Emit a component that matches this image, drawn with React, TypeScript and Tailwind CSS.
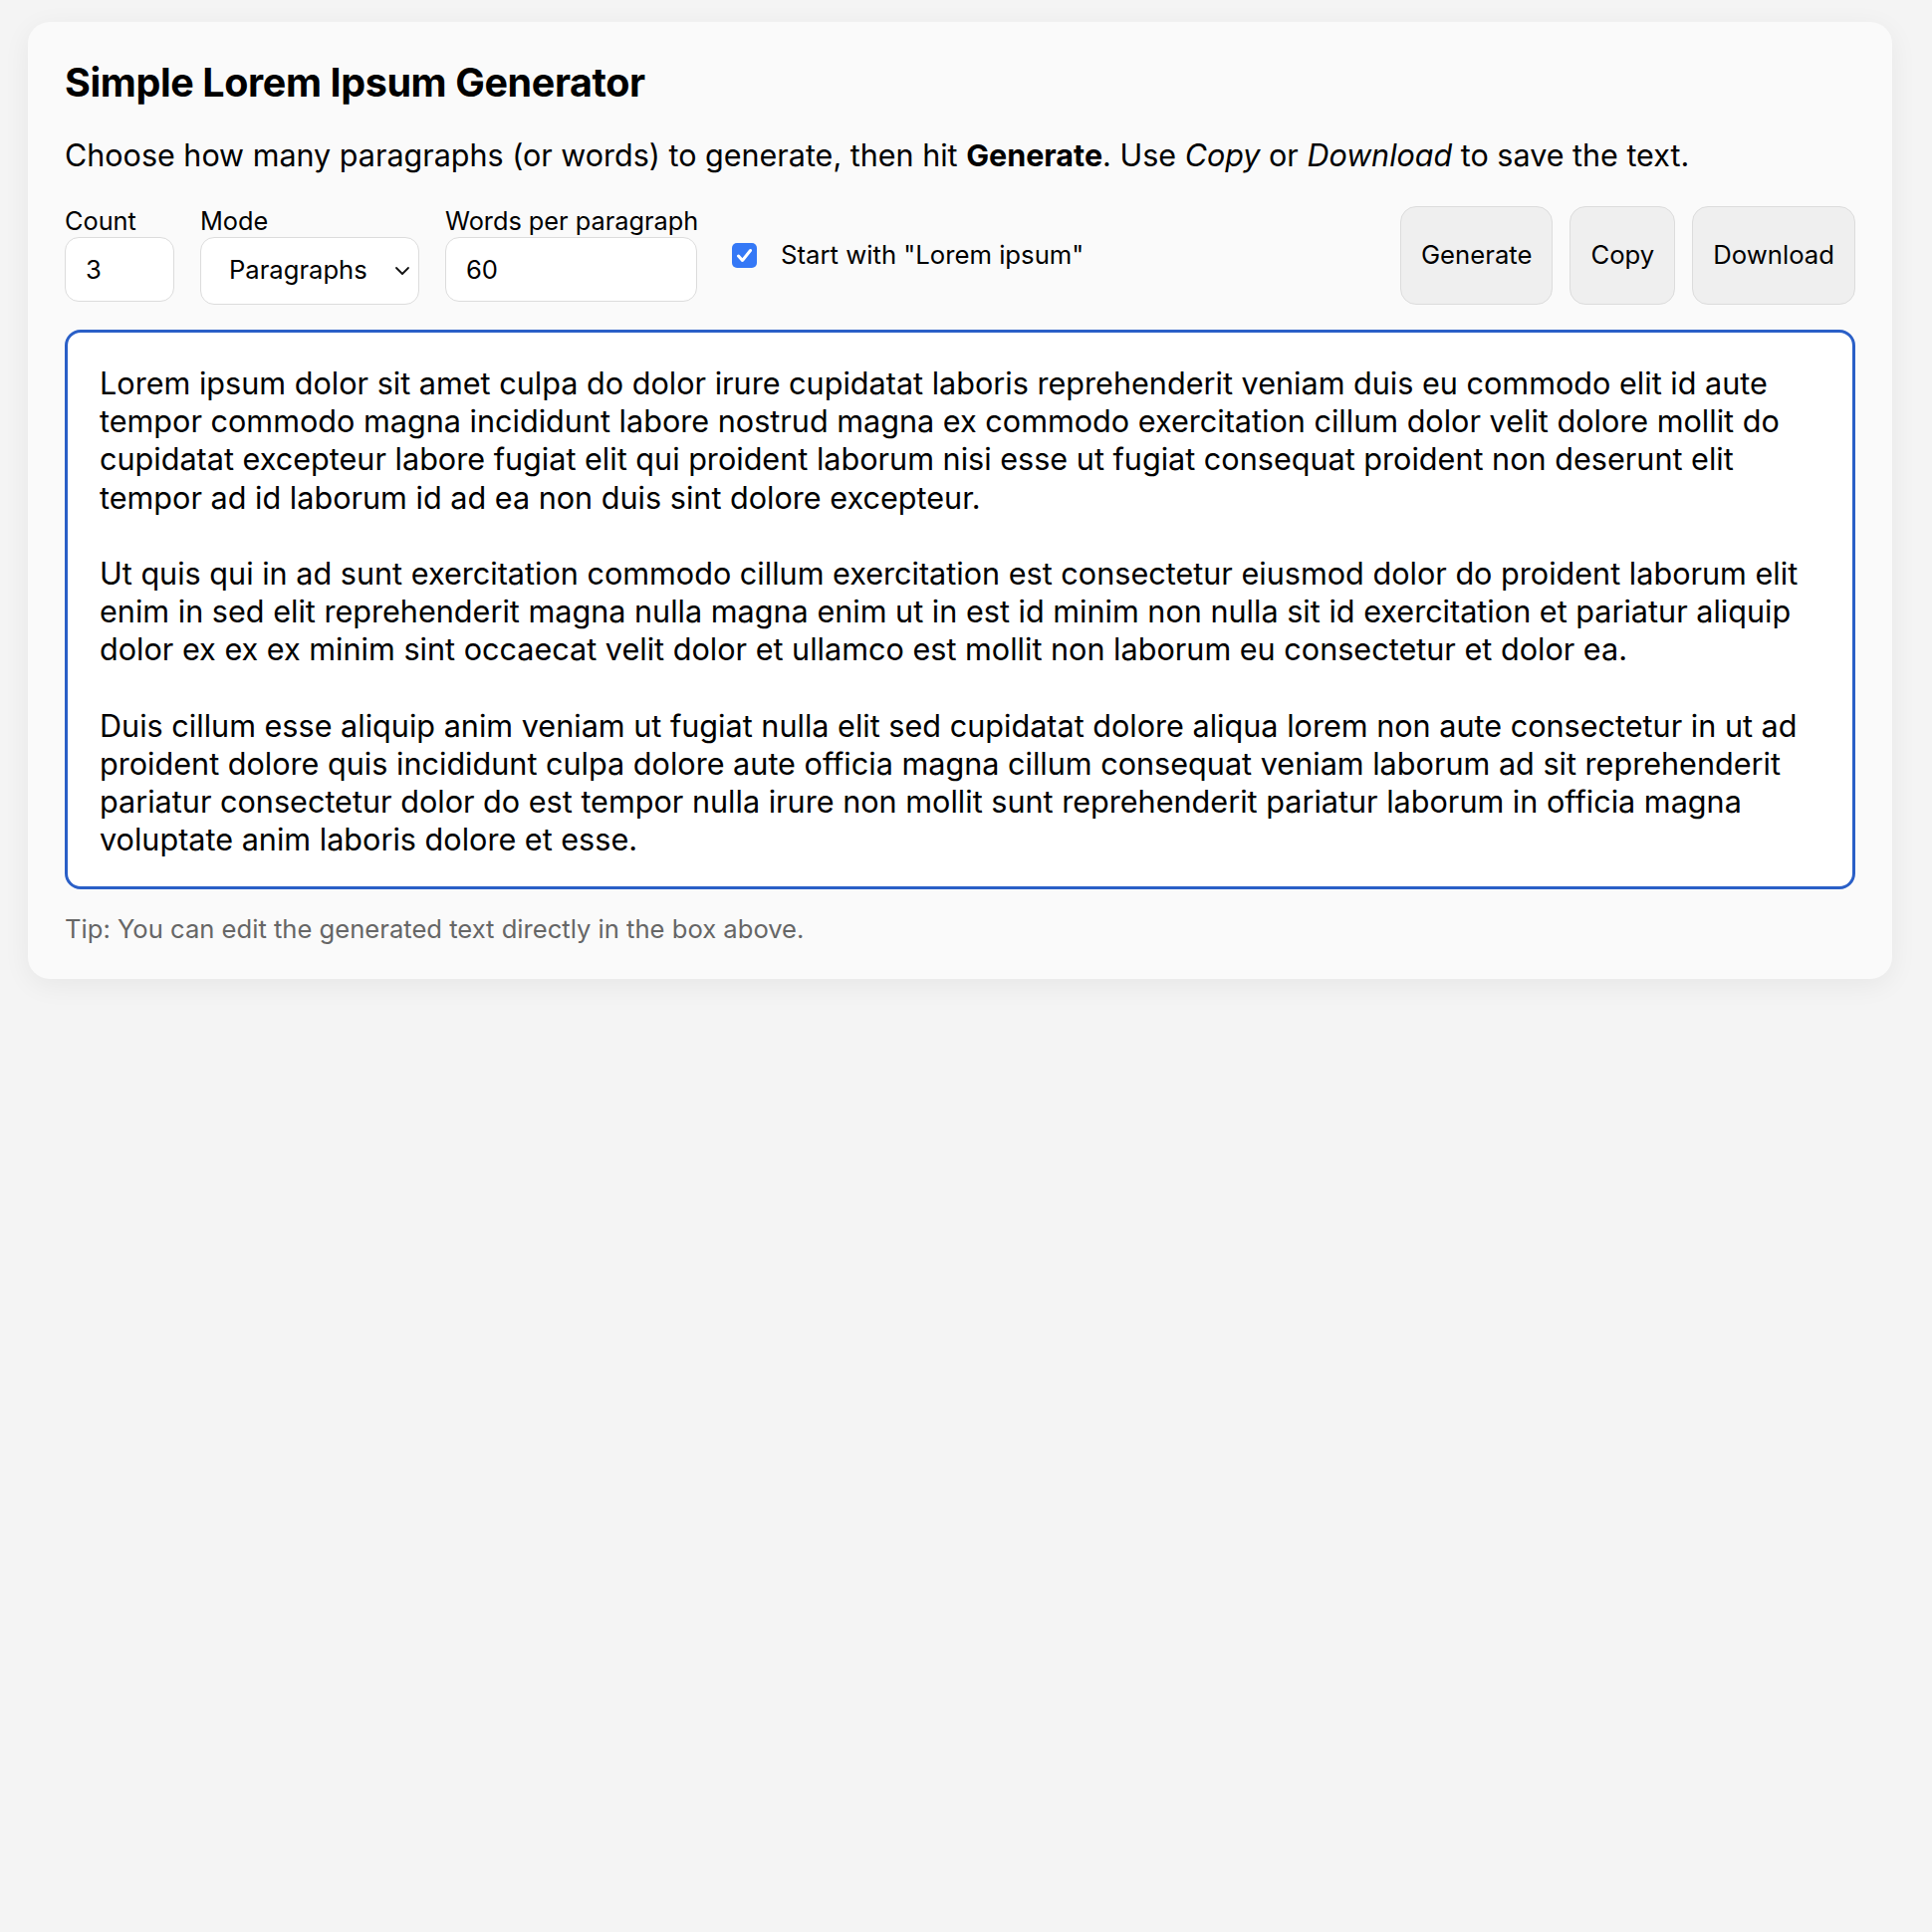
import { useState } from "react";

const initialText = `Lorem ipsum dolor sit amet culpa do dolor irure cupidatat laboris reprehenderit veniam duis eu commodo elit id aute tempor commodo magna incididunt labore nostrud magna ex commodo exercitation cillum dolor velit dolore mollit do cupidatat excepteur labore fugiat elit qui proident laborum nisi esse ut fugiat consequat proident non deserunt elit tempor ad id laborum id ad ea non duis sint dolore excepteur.

Ut quis qui in ad sunt exercitation commodo cillum exercitation est consectetur eiusmod dolor do proident laborum elit enim in sed elit reprehenderit magna nulla magna enim ut in est id minim non nulla sit id exercitation et pariatur aliquip dolor ex ex ex minim sint occaecat velit dolor et ullamco est mollit non laborum eu consectetur et dolor ea.

Duis cillum esse aliquip anim veniam ut fugiat nulla elit sed cupidatat dolore aliqua lorem non aute consectetur in ut ad proident dolore quis incididunt culpa dolore aute officia magna cillum consequat veniam laborum ad sit reprehenderit pariatur consectetur dolor do est tempor nulla irure non mollit sunt reprehenderit pariatur laborum in officia magna voluptate anim laboris dolore et esse.`;

export default function App() {
  const [count, setCount] = useState("3");
  const [mode, setMode] = useState("paragraphs");
  const [words, setWords] = useState("60");
  const [startLorem, setStartLorem] = useState(true);
  const [text, setText] = useState(initialText);

  return (
    <div className="min-h-screen bg-[#f4f4f4] pl-[28px] pr-[40px] pt-[22px] font-['Inter',sans-serif] text-black">
      <div className="rounded-[22px] bg-[#fafafa] shadow-[0_6px_28px_rgba(0,0,0,0.06)] px-[37px] pt-[40px] pb-[36px]">
        <h1 className="text-[39.5px] font-bold leading-[42px] tracking-[-0.4px]">Simple Lorem Ipsum Generator</h1>
        <p className="mt-[33px] text-[30.5px] leading-[38px]">
          Choose how many paragraphs (or words) to generate, then hit <b>Generate</b>. Use <i>Copy</i> or{" "}
          <i>Download</i> to save the text.
        </p>

        {/* Controls */}
        <div className="mt-[32px] flex items-center">
          <div className="flex items-start gap-[26px]">
            <label className="flex flex-col">
              <span className="text-[25.3px] leading-[28px] mb-[2px]">Count</span>
              <input
                value={count}
                onChange={(e) => setCount(e.target.value)}
                className="w-[110px] h-[65px] rounded-[14px] border-[1.6px] border-[#dcdcdc] bg-white px-[20px] text-[25.6px] outline-none"
              />
            </label>
            <label className="flex flex-col">
              <span className="text-[25.3px] leading-[28px] mb-[2px]">Mode</span>
              <div className="relative">
                <select
                  value={mode}
                  onChange={(e) => setMode(e.target.value)}
                  className="appearance-none w-[220px] h-[68px] rounded-[14px] border-[1.6px] border-[#dcdcdc] bg-white pl-[28px] text-[25.6px] outline-none"
                >
                  <option value="paragraphs">Paragraphs</option>
                  <option value="words">Words</option>
                </select>
                <svg
                  className="pointer-events-none absolute right-[9px] top-1/2 -translate-y-1/2"
                  width="16"
                  height="10"
                  viewBox="0 0 16 10"
                  fill="none"
                  stroke="#111"
                  strokeWidth="1.8"
                  strokeLinecap="round"
                  strokeLinejoin="round"
                >
                  <path d="M2 2l6 6 6-6" />
                </svg>
              </div>
            </label>
            <label className="flex flex-col">
              <span className="text-[25.3px] leading-[28px] mb-[2px]">Words per paragraph</span>
              <input
                value={words}
                onChange={(e) => setWords(e.target.value)}
                className="w-[253px] h-[65px] rounded-[14px] border-[1.6px] border-[#dcdcdc] bg-white px-[20px] text-[25.6px] outline-none"
              />
            </label>
          </div>

          <label className="ml-[34px] flex items-center gap-[24px] cursor-pointer">
            <input
              type="checkbox"
              checked={startLorem}
              onChange={(e) => setStartLorem(e.target.checked)}
              className="sr-only"
            />
            <span
              className={`flex h-[25px] w-[25px] items-center justify-center rounded-[5px] ${
                startLorem ? "bg-[#3478f6]" : "border border-gray-400 bg-white"
              }`}
            >
              {startLorem && (
                <svg width="17" height="15" viewBox="0 0 17 15" fill="none" stroke="white" strokeWidth="3" strokeLinecap="round" strokeLinejoin="round">
                  <path d="M2.5 8l4 4.5L14.5 2.5" />
                </svg>
              )}
            </span>
            <span className="text-[25.7px]">Start with "Lorem ipsum"</span>
          </label>

          <div className="ml-auto flex gap-[17px]">
            <button className="h-[99px] rounded-[16px] border-[1.6px] border-[#dcdcdc] bg-[#efefef] px-[20px] text-[25.7px]">
              Generate
            </button>
            <button className="h-[99px] rounded-[16px] border-[1.6px] border-[#dcdcdc] bg-[#efefef] px-[20px] text-[25.7px]">
              Copy
            </button>
            <button className="h-[99px] rounded-[16px] border-[1.6px] border-[#dcdcdc] bg-[#efefef] px-[20px] text-[25.7px]">
              Download
            </button>
          </div>
        </div>

        {/* Output */}
        <textarea
          value={text}
          onChange={(e) => setText(e.target.value)}
          spellCheck
          className="mt-[25px] block h-[562px] w-full resize-none rounded-[16px] border-[3.5px] border-[#2a5fc7] bg-white px-[32px] pt-[32px] pb-[26px] text-[30.6px] leading-[38.2px] outline-none"
        />

        <p className="mt-[26px] text-[25.6px] leading-[28px] text-[#666]">
          Tip: You can edit the generated text directly in the box above.
        </p>
      </div>
    </div>
  );
}
